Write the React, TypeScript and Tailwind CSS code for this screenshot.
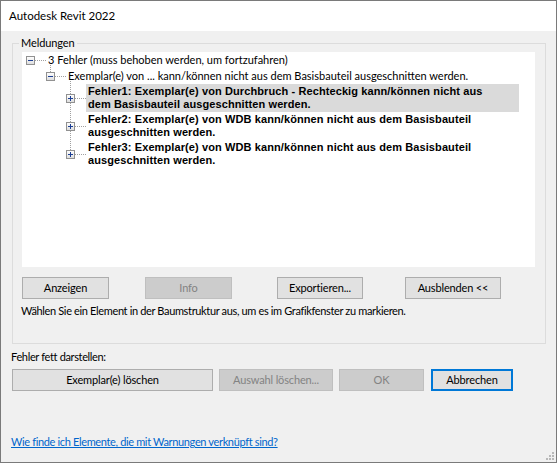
import React from 'react'

const UI = { fontFamily: 'Lato, "Liberation Sans", Arial, sans-serif' }
const TREE_BOLD = { fontFamily: '"Liberation Sans", Arial, sans-serif' }

function Expander({ open }: { open?: boolean }) {
  return (
    <svg width="9" height="9" viewBox="0 0 9 9" className="shrink-0 block">
      <defs>
        <linearGradient id="exg" x1="0" y1="0" x2="0" y2="1">
          <stop offset="0" stopColor="#ffffff" />
          <stop offset="1" stopColor="#dcdcdc" />
        </linearGradient>
      </defs>
      <rect x="0.5" y="0.5" width="8" height="8" fill="url(#exg)" stroke="#919191" />
      <line x1="2" y1="4.5" x2="7" y2="4.5" stroke="#1c3f94" />
      {!open && <line x1="4.5" y1="2" x2="4.5" y2="7" stroke="#1c3f94" />}
    </svg>
  )
}

function Dots({ w }: { w: number }) {
  return <div className="border-t border-dotted border-[#a0a0a0]" style={{ width: w }} />
}

function Btn({
  label,
  w,
  disabled,
  primary,
}: {
  label: string
  w: string
  disabled?: boolean
  primary?: boolean
}) {
  return (
    <button
      className={`${w} h-[22px] text-[11px] tracking-[-0.15px] flex items-center justify-center ${
        disabled
          ? 'bg-[#cccccc] border border-[#bfbfbf] text-[#838383]'
          : primary
          ? 'bg-[#e1e1e1] border-2 border-[#0078d7] text-black'
          : 'bg-[#e1e1e1] border border-[#adadad] text-black'
      }`}
    >
      {label}
    </button>
  )
}

const ERRORS = [
  {
    t1: 'Fehler1: Exemplar(e) von Durchbruch - Rechteckig kann/können nicht aus',
    t2: 'dem Basisbauteil ausgeschnitten werden.',
    sel: true,
  },
  {
    t1: 'Fehler2: Exemplar(e) von WDB kann/können nicht aus dem Basisbauteil',
    t2: 'ausgeschnitten werden.',
  },
  {
    t1: 'Fehler3: Exemplar(e) von WDB kann/können nicht aus dem Basisbauteil',
    t2: 'ausgeschnitten werden.',
  },
]

export default function App() {
  return (
    <div
      className="w-[557px] h-[463px] bg-[#f0f0f0] border border-[#7a7a7a] flex flex-col relative text-black"
      style={UI}
    >
      {/* title bar */}
      <div className="h-[30px] bg-white flex items-center pl-[8px] text-[11.5px] shrink-0">
        Autodesk Revit 2022
      </div>

      {/* Meldungen group */}
      <div className="relative mt-[12px] ml-[11px] w-[534px] h-[301px] border border-[#dcdcdc] shrink-0">
        <div className="absolute -top-[8px] left-[6px] bg-[#f0f0f0] px-[2px] text-[11px] tracking-[-0.1px] leading-[14px]">
          Meldungen
        </div>

        {/* tree */}
        <div className="relative mt-[8px] ml-[9px] w-[513px] h-[215px] bg-white text-[11px]">
          <svg className="absolute inset-0 pointer-events-none" width="513" height="215">
            <line x1="28.5" y1="13" x2="28.5" y2="20" stroke="#a0a0a0" strokeDasharray="1 1" />
            <line x1="48.5" y1="29" x2="48.5" y2="103" stroke="#a0a0a0" strokeDasharray="1 1" />
          </svg>

          <div className="h-[16px] flex items-center pl-[4px]">
            <Expander open />
            <Dots w={11} />
            <span className="ml-[2px] whitespace-nowrap">3 Fehler (muss behoben werden, um fortzufahren)</span>
          </div>
          <div className="h-[16px] flex items-center pl-[24px]">
            <Expander open />
            <Dots w={11} />
            <span className="ml-[2px] whitespace-nowrap">
              Exemplar(e) von ... kann/können nicht aus dem Basisbauteil ausgeschnitten werden.
            </span>
          </div>

          {ERRORS.map((e) => (
            <div key={e.t1} className="h-[28px] flex items-center pl-[44px]">
              <div className="relative z-10">
                <Expander />
              </div>
              <Dots w={11} />
              <div
                className={`h-[28px] w-[433px] px-[2px] py-[1px] font-bold text-[11px] leading-[13px] tracking-[0.1px] whitespace-nowrap ${
                  e.sel ? 'bg-[#dadada]' : ''
                }`}
                style={TREE_BOLD}
              >
                <div>{e.t1}</div>
                <div>{e.t2}</div>
              </div>
            </div>
          ))}
        </div>

        {/* buttons */}
        <div className="flex mt-[10px] ml-[9px]">
          <Btn label="Anzeigen" w="w-[87px]" />
          <div className="w-[36px]" />
          <Btn label="Info" w="w-[87px]" disabled />
          <div className="w-[45px]" />
          <Btn label="Exportieren..." w="w-[86px]" />
          <div className="w-[42px]" />
          <Btn label="Ausblenden <<" w="w-[96px]" />
        </div>
        <div className="mt-[5px] ml-[8px] text-[11px] tracking-[-0.35px] leading-[14px] whitespace-nowrap">
          Wählen Sie ein Element in der Baumstruktur aus, um es im Grafikfenster zu markieren.
        </div>
      </div>

      <div className="mt-[6px] ml-[10px] text-[11px] tracking-[-0.35px] leading-[14px]">
        Fehler fett darstellen:
      </div>

      <div className="flex mt-[5px] ml-[11px]">
        <Btn label="Exemplar(e) löschen" w="w-[201px]" />
        <div className="w-[6px]" />
        <Btn label="Auswahl löschen..." w="w-[114px]" disabled />
        <div className="w-[6px]" />
        <Btn label="OK" w="w-[85px]" disabled />
        <div className="w-[7px]" />
        <Btn label="Abbrechen" w="w-[82px]" primary />
      </div>

      <div className="mt-[44px] ml-[10px] text-[11px] tracking-[-0.35px] leading-[14px] text-[#0066cc] underline">
        Wie finde ich Elemente, die mit Warnungen verknüpft sind?
      </div>

      {/* resize grip */}
      <svg className="absolute right-[1px] bottom-[1px]" width="10" height="10" viewBox="0 0 10 10">
        <rect x="7" y="1" width="2" height="2" fill="#b8b8b8" />
        <rect x="4" y="4" width="2" height="2" fill="#b8b8b8" />
        <rect x="7" y="4" width="2" height="2" fill="#b8b8b8" />
        <rect x="1" y="7" width="2" height="2" fill="#b8b8b8" />
        <rect x="4" y="7" width="2" height="2" fill="#b8b8b8" />
        <rect x="7" y="7" width="2" height="2" fill="#b8b8b8" />
      </svg>
    </div>
  )
}
